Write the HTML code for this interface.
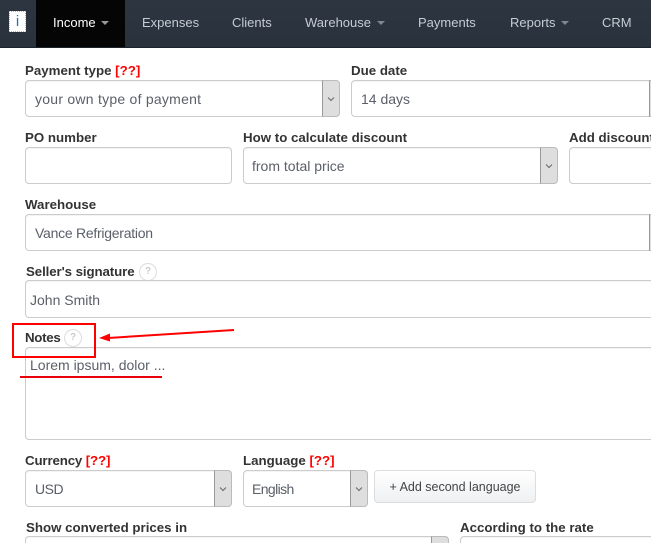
<!DOCTYPE html>
<html><head><meta charset="utf-8"><style>
html,body{margin:0;padding:0;background:#fff;width:651px;height:543px;overflow:hidden}
#p{position:relative;width:651px;height:543px;overflow:hidden;font-family:"Liberation Sans",sans-serif;font-size:14px;color:#555}
#p div{position:absolute;box-sizing:border-box}
.nav{left:0;top:0;width:651px;height:48px;background:linear-gradient(#2c3540,#29323d);border-bottom:1px solid #1c232b}
.n{top:15px;line-height:16px;color:#c6ccd3;white-space:nowrap;font-size:13px}
.c{top:21px;width:0;height:0;border-left:4px solid transparent;border-right:4px solid transparent;border-top:4px solid #7f8790}
.l{font-weight:bold;color:#333;line-height:16px;white-space:nowrap;font-size:13.3px}
.l b{color:#f00}
.f{border:1px solid #ccc;border-radius:4px;background:#fff;box-shadow:inset 0 1px 1px rgba(0,0,0,.05)}
.r{border-right:0;border-radius:4px 0 0 4px}
.t{line-height:18px;white-space:nowrap;color:#5a5f68}
.s{width:18px;background:#dedede;border:1px solid #bbb;border-radius:0 4px 4px 0;border-left-color:#999}
.s svg{position:absolute;left:3px;top:50%;margin-top:-3px}
.q{width:18px;height:18px;border:1px solid #ddd;border-radius:50%;color:#ccc;font-size:10px;font-weight:bold;line-height:16px;text-align:center}
</style></head><body><div id="p">
<div class="nav"></div>
<div style="left:9px;top:11px;width:17px;height:21px;background:#fff;border:1px dotted #c9a9b4;color:#1d6fb8;font-size:15px;line-height:19px;text-align:center">i</div>
<div style="left:36px;top:0;width:89px;height:47px;background:#050505"></div>
<div class="n" style="left:53px;color:#fff">Income</div><div class="c" style="left:101px;border-top-color:#999"></div>
<div class="n" style="left:142px">Expenses</div>
<div class="n" style="left:232px">Clients</div>
<div class="n" style="left:305px">Warehouse</div><div class="c" style="left:377px"></div>
<div class="n" style="left:418px">Payments</div>
<div class="n" style="left:510px">Reports</div><div class="c" style="left:561px"></div>
<div class="n" style="left:602px">CRM</div>

<div class="l" style="left:25px;top:63px">Payment type <b>[??]</b></div>
<div class="f" style="left:25px;top:80px;width:314px;height:37px"></div>
<div class="t" style="left:35px;top:90px;letter-spacing:.25px">your own type of payment</div>
<div class="s" style="left:322px;top:80px;height:37px"><svg width="10" height="6"><path d="M2 1.500l3 3 3-3" fill="none" stroke="#666"/></svg></div>
<div class="l" style="left:351px;top:63px">Due date</div>
<div class="f r" style="left:351px;top:80px;width:300px;height:37px"></div>
<div class="t" style="left:361px;top:90px">14 days</div>
<div class="s" style="left:649px;top:80px;height:37px;width:2px;border-right:0;border-radius:0"></div>

<div class="l" style="left:25px;top:130px">PO number</div>
<div class="f" style="left:25px;top:147px;width:207px;height:37px"></div>
<div class="l" style="left:243px;top:130px">How to calculate discount</div>
<div class="f" style="left:243px;top:147px;width:314px;height:37px"></div>
<div class="t" style="left:252px;top:157px">from total price</div>
<div class="s" style="left:540px;top:147px;height:37px"><svg width="10" height="6"><path d="M2 1.500l3 3 3-3" fill="none" stroke="#666"/></svg></div>
<div class="l" style="left:569px;top:130px;width:82px;overflow:hidden">Add discount</div>
<div class="f r" style="left:569px;top:147px;width:82px;height:37px"></div>

<div class="l" style="left:25px;top:197px">Warehouse</div>
<div class="f r" style="left:25px;top:214px;width:626px;height:37px"></div>
<div class="t" style="left:35px;top:224px;letter-spacing:-.26px">Vance Refrigeration</div>
<div class="s" style="left:649px;top:214px;height:37px;width:2px;border-right:0;border-radius:0"></div>

<div class="l" style="left:26px;top:264px;letter-spacing:-.1px">Seller's signature</div>
<div class="q" style="left:139px;top:263px">?</div>
<div class="f r" style="left:25px;top:280px;width:626px;height:38px"></div>
<div class="t" style="left:30px;top:291px">John Smith</div>

<div class="l" style="left:25px;top:330px;letter-spacing:-.3px">Notes</div>
<div class="q" style="left:64px;top:329px">?</div>
<div class="f r" style="left:25px;top:347px;width:626px;height:93px"></div>
<div class="t" style="left:30px;top:356px">Lorem ipsum, dolor ...</div>

<div class="l" style="left:25px;top:453px;letter-spacing:-.15px">Currency <b>[??]</b></div>
<div class="f" style="left:25px;top:470px;width:206px;height:37px"></div>
<div class="t" style="left:35px;top:480px;letter-spacing:-.5px">USD</div>
<div class="s" style="left:214px;top:470px;height:37px"><svg width="10" height="6"><path d="M2 1.500l3 3 3-3" fill="none" stroke="#666"/></svg></div>
<div class="l" style="left:243px;top:453px">Language <b>[??]</b></div>
<div class="f" style="left:243px;top:470px;width:124px;height:37px"></div>
<div class="t" style="left:252px;top:480px;letter-spacing:-.6px">English</div>
<div class="s" style="left:350px;top:470px;height:37px"><svg width="10" height="6"><path d="M2 1.500l3 3 3-3" fill="none" stroke="#666"/></svg></div>
<div style="left:374px;top:470px;width:162px;height:33px;border:1px solid #ddd;border-radius:4px;background:linear-gradient(#fff,#eef0f2);color:#444;text-align:center;line-height:33px;font-size:12.5px;white-space:nowrap">+ Add second language</div>

<div class="l" style="left:26px;top:520px">Show converted prices in</div>
<div class="f" style="left:25px;top:536px;width:423px;height:7px;border-bottom:0;border-radius:4px 4px 0 0"></div>
<div class="s" style="left:431px;top:536px;height:7px;border-bottom:0;border-radius:0 4px 0 0"></div>
<div class="l" style="left:460px;top:520px">According to the rate</div>
<div class="f" style="left:460px;top:536px;width:191px;height:7px;border-bottom:0;border-right:0;border-radius:4px 0 0 0"></div>

<div style="left:12px;top:323px;width:84px;height:35px;border:2px solid #f00"></div>
<div style="left:20px;top:376px;width:142px;height:2px;background:#e8000b"></div>
<svg style="position:absolute;left:0;top:0" width="651" height="543"><path d="M234 330L108 338" stroke="#f00" stroke-width="2" fill="none"/><path d="M99 338l11-4.500v8z" fill="#f00"/></svg>
</div></body></html>
